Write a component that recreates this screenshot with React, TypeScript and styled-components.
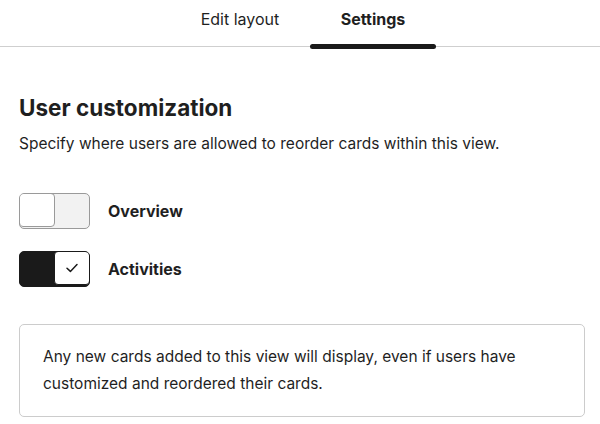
import styled, { createGlobalStyle } from 'styled-components';

const GlobalStyle = createGlobalStyle`
  body {
    margin: 0;
    background: #fff;
    font-family: Inter, 'Noto Sans', sans-serif;
    color: #1f1f1f;
  }
`;

const Page = styled.div`
  width: 600px;
  height: 424px;
  overflow: hidden;
  display: flex;
  flex-direction: column;
`;

const TabBar = styled.div`
  display: flex;
  gap: 15px;
  height: 46px;
  border-bottom: 1px solid #cfcfcf;
  padding-left: 185px;
`;

const Tab = styled.div<{ $active?: boolean }>`
  position: relative;
  width: ${(p) => (p.$active ? '126px' : '110px')};
  display: flex;
  justify-content: center;
  padding-top: 9px;
  font-size: 16px;
  font-weight: ${(p) => (p.$active ? 700 : 400)};
  color: #1f1f1f;
  &::after {
    content: '';
    display: ${(p) => (p.$active ? 'block' : 'none')};
    position: absolute;
    left: 0;
    right: 0;
    bottom: -3px;
    height: 5px;
    border-radius: 3px;
    background: #1a1a1a;
  }
`;

const Content = styled.div`
  padding: 47px 15px 0 19px;
  display: flex;
  flex-direction: column;
`;

const Title = styled.h2`
  margin: 0;
  font-size: 22.5px;
  font-weight: 700;
  line-height: 27px;
`;

const Description = styled.p`
  margin: 13px 0 0;
  font-size: 15.5px;
  line-height: 20px;
`;

const ToggleList = styled.div`
  display: flex;
  flex-direction: column;
  gap: 22px;
  margin-top: 39px;
`;

const ToggleRow = styled.div`
  display: flex;
  align-items: center;
  gap: 18px;
`;

const Toggle = styled.div<{ $on?: boolean }>`
  width: 71px;
  height: 36px;
  box-sizing: border-box;
  border: 1px solid ${(p) => (p.$on ? '#1a1a1a' : '#9a9a9a')};
  border-radius: 5px;
  display: flex;
  overflow: hidden;
  background: ${(p) => (p.$on ? '#1a1a1a' : '#f2f2f2')};
  flex-direction: ${(p) => (p.$on ? 'row-reverse' : 'row')};
`;

const Knob = styled.div<{ $on?: boolean }>`
  width: 36px;
  height: 100%;
  box-sizing: border-box;
  background: #fff;
  border-radius: 4px;
  border: 1px solid ${(p) => (p.$on ? '#1a1a1a' : '#9a9a9a')};
  margin: -1px;
  display: flex;
  align-items: center;
  justify-content: center;
`;

const Label = styled.span`
  font-size: 16px;
  font-weight: 700;
`;

const InfoBox = styled.div`
  margin-top: 37px;
  border: 1px solid #cccccc;
  border-radius: 5px;
  padding: 18px 23px 19px;
  font-size: 15.5px;
  line-height: 27px;
`;

const Check = () => (
  <svg width="14" height="14" viewBox="0 0 14 14" fill="none">
    <path d="M2 7.2 L5.4 10.4 L12 3.6" stroke="#1a1a1a" strokeWidth="1.5" strokeLinecap="round" strokeLinejoin="round" />
  </svg>
);

const items = [
  { label: 'Overview', on: false },
  { label: 'Activities', on: true },
];

export default function App() {
  return (
    <Page>
      <GlobalStyle />
      <TabBar>
        <Tab>Edit layout</Tab>
        <Tab $active>Settings</Tab>
      </TabBar>
      <Content>
        <Title>User customization</Title>
        <Description>Specify where users are allowed to reorder cards within this view.</Description>
        <ToggleList>
          {items.map((item) => (
            <ToggleRow key={item.label}>
              <Toggle $on={item.on}>
                <Knob $on={item.on}>{item.on && <Check />}</Knob>
              </Toggle>
              <Label>{item.label}</Label>
            </ToggleRow>
          ))}
        </ToggleList>
        <InfoBox>
          Any new cards added to this view will display, even if users have customized and reordered their cards.
        </InfoBox>
      </Content>
    </Page>
  );
}
